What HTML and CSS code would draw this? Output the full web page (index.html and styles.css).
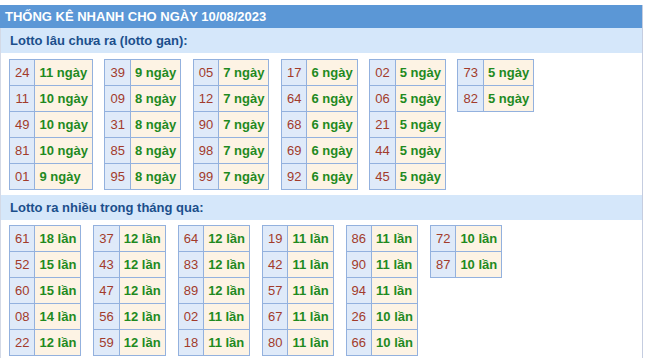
FILE: index.html
```html
<!DOCTYPE html>
<html lang="vi">
<head>
<meta charset="utf-8">
<title>Thống kê nhanh</title>
<link rel="stylesheet" href="styles.css">
</head>
<body>
<div class="panel">
  <div class="title">THỐNG KÊ NHANH CHO NGÀY 10/08/2023</div>
  <div class="sub">Lotto lâu chưa ra (lotto gan):</div>
  <div class="tables first">
    <table><tr><td class="n">24</td><td class="v">11 ngày</td></tr><tr><td class="n">11</td><td class="v">10 ngày</td></tr><tr><td class="n">49</td><td class="v">10 ngày</td></tr><tr><td class="n">81</td><td class="v">10 ngày</td></tr><tr><td class="n">01</td><td class="v">9 ngày</td></tr></table>
    <table><tr><td class="n">39</td><td class="v">9 ngày</td></tr><tr><td class="n">09</td><td class="v">8 ngày</td></tr><tr><td class="n">31</td><td class="v">8 ngày</td></tr><tr><td class="n">85</td><td class="v">8 ngày</td></tr><tr><td class="n">95</td><td class="v">8 ngày</td></tr></table>
    <table><tr><td class="n">05</td><td class="v">7 ngày</td></tr><tr><td class="n">12</td><td class="v">7 ngày</td></tr><tr><td class="n">90</td><td class="v">7 ngày</td></tr><tr><td class="n">98</td><td class="v">7 ngày</td></tr><tr><td class="n">99</td><td class="v">7 ngày</td></tr></table>
    <table><tr><td class="n">17</td><td class="v">6 ngày</td></tr><tr><td class="n">64</td><td class="v">6 ngày</td></tr><tr><td class="n">68</td><td class="v">6 ngày</td></tr><tr><td class="n">69</td><td class="v">6 ngày</td></tr><tr><td class="n">92</td><td class="v">6 ngày</td></tr></table>
    <table><tr><td class="n">02</td><td class="v">5 ngày</td></tr><tr><td class="n">06</td><td class="v">5 ngày</td></tr><tr><td class="n">21</td><td class="v">5 ngày</td></tr><tr><td class="n">44</td><td class="v">5 ngày</td></tr><tr><td class="n">45</td><td class="v">5 ngày</td></tr></table>
    <table><tr><td class="n">73</td><td class="v">5 ngày</td></tr><tr><td class="n">82</td><td class="v">5 ngày</td></tr></table>
  </div>
  <div class="sub">Lotto ra nhiều trong tháng qua:</div>
  <div class="tables second">
    <table><tr><td class="n">61</td><td class="v">18 lần</td></tr><tr><td class="n">52</td><td class="v">15 lần</td></tr><tr><td class="n">60</td><td class="v">15 lần</td></tr><tr><td class="n">08</td><td class="v">14 lần</td></tr><tr><td class="n">22</td><td class="v">12 lần</td></tr></table>
    <table><tr><td class="n">37</td><td class="v">12 lần</td></tr><tr><td class="n">43</td><td class="v">12 lần</td></tr><tr><td class="n">47</td><td class="v">12 lần</td></tr><tr><td class="n">56</td><td class="v">12 lần</td></tr><tr><td class="n">59</td><td class="v">12 lần</td></tr></table>
    <table><tr><td class="n">64</td><td class="v">12 lần</td></tr><tr><td class="n">83</td><td class="v">12 lần</td></tr><tr><td class="n">89</td><td class="v">12 lần</td></tr><tr><td class="n">02</td><td class="v">11 lần</td></tr><tr><td class="n">18</td><td class="v">11 lần</td></tr></table>
    <table><tr><td class="n">19</td><td class="v">11 lần</td></tr><tr><td class="n">42</td><td class="v">11 lần</td></tr><tr><td class="n">57</td><td class="v">11 lần</td></tr><tr><td class="n">67</td><td class="v">11 lần</td></tr><tr><td class="n">80</td><td class="v">11 lần</td></tr></table>
    <table><tr><td class="n">86</td><td class="v">11 lần</td></tr><tr><td class="n">90</td><td class="v">11 lần</td></tr><tr><td class="n">94</td><td class="v">11 lần</td></tr><tr><td class="n">26</td><td class="v">10 lần</td></tr><tr><td class="n">66</td><td class="v">10 lần</td></tr></table>
    <table><tr><td class="n">72</td><td class="v">10 lần</td></tr><tr><td class="n">87</td><td class="v">10 lần</td></tr></table>
  </div>
</div>
</body>
</html>
```
FILE: styles.css
```css
html, body {
  margin: 0;
  padding: 0;
  background: #ffffff;
}
body {
  padding-top: 5px;
  font-family: "Liberation Sans", Arial, sans-serif;
  font-size: 13px;
}
.panel {
  width: 641px;
  border-left: 1px solid #d3d9e6;
  border-right: 1px solid #c5cde0;
}
.title {
  height: 23px;
  line-height: 23px;
  padding-left: 5px;
  background: #5b97d6;
  color: #ffffff;
  font-weight: bold;
  margin-left: -1px;
}
.sub {
  height: 25px;
  line-height: 25px;
  padding-left: 9px;
  background: #d5e7fa;
  color: #1b4f8c;
  font-weight: bold;
}
.tables {
  display: flex;
  align-items: flex-start;
  padding-left: 8px;
}
.first {
  gap: 11.6px;
  padding-top: 6px;
  padding-bottom: 5px;
}
.second {
  gap: 12px;
  padding-top: 5px;
  padding-bottom: 5px;
}
table {
  border-collapse: collapse;
}
td {
  border: 1px solid #93b1de;
  height: 25px;
  line-height: 25px;
  white-space: nowrap;
}
.n {
  padding: 0 5px;
  background: #dfeaf9;
  color: #a23b2b;
  text-align: center;
}
.v {
  padding: 0 4px;
  background: #fdf3e4;
  color: #1f8a1f;
  font-weight: bold;
}
```
